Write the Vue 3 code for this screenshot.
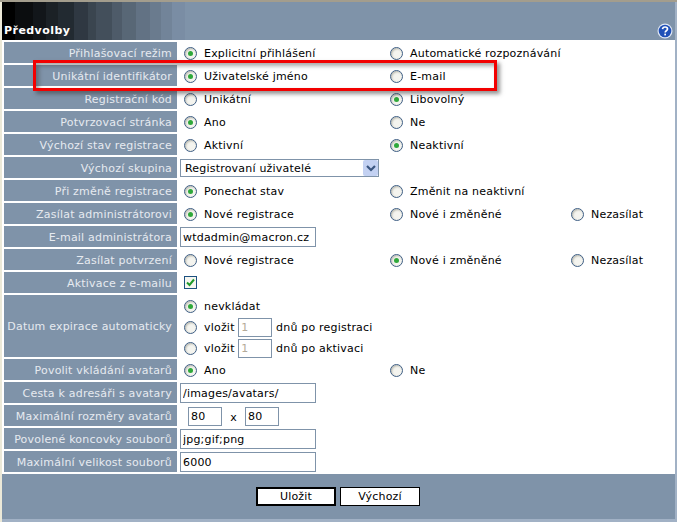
<template>
  <div class="window">
    <div class="header">
      <span class="title">Předvolby</span>
      <svg class="help" width="16" height="16" viewBox="0 0 16 16">
        <circle cx="8" cy="8" r="7.500" fill="#dfe7f4" />
        <circle cx="8" cy="8" r="6.300" fill="#1f50b8" />
        <path d="M5.500 6.200c.2-1.500 1.300-2.200 2.600-2.200 1.400 0 2.400.9 2.400 2 0 1.800-2.300 1.600-2.300 3.400" fill="none" stroke="#fff" stroke-width="1.700" />
        <rect x="7.300" y="10.600" width="1.700" height="1.800" fill="#fff" />
      </svg>
    </div>

    <div class="body">
      <div v-for="row in rows" :key="row.label" class="row" :class="row.cls">
        <div class="label">{{ row.label }}</div>
        <div class="value">
          <template v-if="row.options">
            <label v-for="(opt, i) in row.options" :key="opt" class="option" :class="'col' + i">
              <span class="radio" :class="{ on: row.active === i }"></span>{{ opt }}
            </label>
          </template>
          <input v-else-if="row.text !== undefined" class="field" :value="row.text" readonly>
          <div v-else-if="row.select" class="select">
            <span>{{ row.select }}</span>
            <span class="arrow">
              <svg width="16" height="16" viewBox="0 0 16 16"><path d="M4 6l4 4 4-4" fill="none" stroke="#3a5680" stroke-width="2.200" /></svg>
            </span>
          </div>
          <span v-else-if="row.check" class="check">
            <svg width="11" height="11" viewBox="0 0 11 11"><path d="M2 5.500l2.500 2.500 4.500-5.500" fill="none" stroke="#1f9a2a" stroke-width="2" /></svg>
          </span>
          <div v-else-if="row.expire" class="expire">
            <label class="line"><span class="radio on"></span>nevkládat</label>
            <label class="line"><span class="radio"></span>vložit <input class="small muted" value="1" readonly> dnů po registraci</label>
            <label class="line"><span class="radio"></span>vložit <input class="small muted" value="1" readonly> dnů po aktivaci</label>
          </div>
          <div v-else-if="row.size" class="size">
            <input class="small" value="80" readonly>
            <span class="times">x</span>
            <input class="small" value="80" readonly>
          </div>
        </div>
      </div>
    </div>

    <div class="footer">
      <button class="btn primary">Uložit</button>
      <button class="btn">Výchozí</button>
    </div>

    <div class="highlight"></div>
  </div>
</template>

<script setup>
const rows = [
  { label: 'Přihlašovací režim', options: ['Explicitní přihlášení', 'Automatické rozpoznávání'], active: 0 },
  { label: 'Unikátní identifikátor', options: ['Uživatelské jméno', 'E-mail'], active: 0 },
  { label: 'Registrační kód', options: ['Unikátní', 'Libovolný'], active: 1 },
  { label: 'Potvrzovací stránka', options: ['Ano', 'Ne'], active: 0 },
  { label: 'Výchozí stav registrace', options: ['Aktivní', 'Neaktivní'], active: 1 },
  { label: 'Výchozí skupina', select: 'Registrovaní uživatelé' },
  { label: 'Při změně registrace', options: ['Ponechat stav', 'Změnit na neaktivní'], active: 0 },
  { label: 'Zasílat administrátorovi', options: ['Nové registrace', 'Nové i změněné', 'Nezasílat'], active: 0 },
  { label: 'E-mail administrátora', text: 'wtdadmin@macron.cz' },
  { label: 'Zasílat potvrzení', options: ['Nové registrace', 'Nové i změněné', 'Nezasílat'], active: 1 },
  { label: 'Aktivace z e-mailu', check: true },
  { label: 'Datum expirace automaticky', expire: true, cls: 'tall' },
  { label: 'Povolit vkládání avatarů', options: ['Ano', 'Ne'], active: 0 },
  { label: 'Cesta k adresáři s avatary', text: '/images/avatars/' },
  { label: 'Maximální rozměry avatarů', size: true },
  { label: 'Povolené koncovky souborů', text: 'jpg;gif;png' },
  { label: 'Maximální velikost souborů', text: '6000' },
]
</script>

<style>
html, body {
  margin: 0;
  background: #fff;
}
</style>

<style scoped>
.window {
  position: relative;
  width: 677px;
  height: 522px;
  box-sizing: border-box;
  padding: 2px 2px 3px 2px;
  display: flex;
  flex-direction: column;
  background: #a1b1c5;
  font-family: "DejaVu Sans", Verdana, sans-serif;
  font-size: 11px;
  letter-spacing: 0.2px;
  color: #000;
  overflow: hidden;
}

.window::before {
  content: '';
  position: absolute;
  left: 0;
  top: 0;
  width: 100%;
  height: 2px;
  background: #a39d8d;
}

.window::after {
  content: '';
  position: absolute;
  left: 0;
  top: 2px;
  bottom: 0;
  width: 2px;
  background: #ece9d8;
}

.header {
  height: 38px;
  flex: none;
  display: flex;
  align-items: flex-end;
  justify-content: space-between;
  box-sizing: border-box;
  padding: 0 2px 1px 2px;
  background: linear-gradient(to right,
    #000 0 13px, #0b0d0f 13px 31px, #12161a 31px 44px, #1b2126 44px 56px,
    #222a31 56px 72px, #2f3842 72px 86px, #3a454f 86px 94px, #434f5b 94px 110px,
    #4e5b69 110px 120px, #586776 120px 134px, #627284 134px 148px, #6a7b8e 148px 159px,
    #728499 159px 170px, #7a8da4 170px 183px, #7f93a9 183px);
}

.title {
  color: #fff;
  font-weight: bold;
  font-size: 11px;
  letter-spacing: 0.45px;
  line-height: 14px;
  padding-bottom: 1px;
}

.body {
  flex: 1;
  background: #fff;
  padding: 2px 0 0 2px;
  display: flex;
  flex-direction: column;
  gap: 2px;
}

.row {
  display: flex;
  height: 21px;
  gap: 3px;
}

.row.tall {
  height: 62px;
}

.label {
  width: 173px;
  flex: none;
  box-sizing: border-box;
  padding: 1px 5px 0 0;
  display: flex;
  align-items: center;
  justify-content: flex-end;
  background: #7f93a9;
  color: #e6eaf0;
  white-space: nowrap;
}

.value {
  display: flex;
  align-items: center;
  flex: 1;
  min-width: 0;
}

.option {
  display: flex;
  align-items: center;
  white-space: nowrap;
  padding: 2px 0 0 4px;
  box-sizing: border-box;
}

.col0 { width: 206px; }
.col1 { width: 181px; }

.radio {
  position: relative;
  width: 13px;
  height: 13px;
  flex: none;
  box-sizing: border-box;
  margin-right: 7px;
  border: 1px solid #3f5f85;
  border-radius: 50%;
  background: #f4f4ef;
  box-shadow: inset 1px 1px 2px #b8b8ae;
}

.radio.on::after {
  content: '';
  position: absolute;
  left: 3px;
  top: 3px;
  width: 5px;
  height: 5px;
  border-radius: 50%;
  background: #2fa83a;
}

.field {
  width: 136px;
  height: 20px;
  margin-top: 1px;
  box-sizing: border-box;
  border: 1px solid #7f93a9;
  padding: 0 2px;
  font: inherit;
  letter-spacing: inherit;
  color: #000;
  outline: none;
}

.select {
  width: 199px;
  height: 18px;
  margin-top: 1px;
  box-sizing: border-box;
  border: 1px solid #7f93a9;
  display: flex;
  align-items: center;
  justify-content: space-between;
  padding-left: 4px;
  background: #fff;
}

.arrow {
  width: 15px;
  height: 16px;
  background: #c3d1f2;
  border-radius: 2px;
}

.arrow svg {
  display: block;
}

.check {
  width: 13px;
  height: 13px;
  margin-left: 4px;
  box-sizing: border-box;
  border: 1px solid #1c5180;
  background: #f6f6f0;
}

.check svg {
  display: block;
}

.expire {
  display: flex;
  flex-direction: column;
  padding: 2px 0 0 4px;
  gap: 1px;
}

.line {
  display: flex;
  align-items: center;
  height: 20px;
  white-space: pre;
}

.small {
  width: 34px;
  height: 19px;
  box-sizing: border-box;
  border: 1px solid #7f93a9;
  padding: 0 2px;
  font: inherit;
  letter-spacing: inherit;
  color: #000;
  outline: none;
}

.muted {
  color: #b5aa99;
}

.size {
  display: flex;
  align-items: center;
  padding: 1px 0 0 8px;
}

.times {
  width: 23px;
  text-align: center;
  padding-top: 3px;
}

.footer {
  height: 45px;
  flex: none;
  background: #7f93a9;
  display: flex;
  align-items: flex-start;
  gap: 4px;
  padding: 13px 0 0 254px;
  box-sizing: border-box;
}

.btn {
  width: 80px;
  height: 19px;
  box-sizing: border-box;
  border: 1px solid #000;
  background: #fff;
  font: inherit;
  letter-spacing: inherit;
  color: #000;
  padding: 0;
}

.btn.primary {
  border-width: 2px;
}

.highlight {
  position: absolute;
  left: 33px;
  top: 60px;
  width: 464px;
  height: 31px;
  box-sizing: border-box;
  border: 3px solid #f20000;
  box-shadow: 3px 3px 4px rgba(60, 60, 60, 0.55), inset 3px 3px 4px rgba(60, 60, 60, 0.45);
  pointer-events: none;
}
</style>
